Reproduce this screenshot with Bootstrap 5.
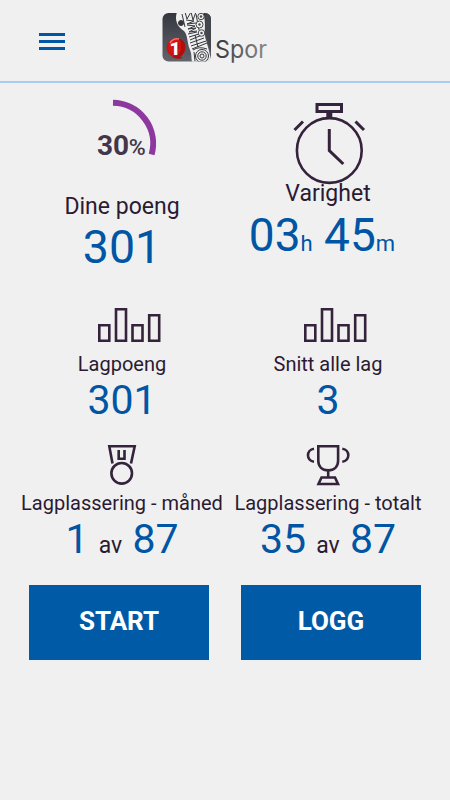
<!DOCTYPE html>
<html lang="no">
<head>
<meta charset="utf-8">
<meta name="viewport" content="width=device-width, initial-scale=1">
<title>Spor</title>
<link href="https://cdn.jsdelivr.net/npm/bootstrap@5.3.0/dist/css/bootstrap.min.css" rel="stylesheet">
<style>
body{background:#f0f0f0;color:#2b1a33;font-family:Roboto,"Liberation Sans",sans-serif}
svg{display:block}
.topbar{height:83px;border-bottom:2px solid #a9ccf0}
.menu-btn{margin-left:38px;width:28px;height:22px;margin-top:2px}
.logo{margin-left:96px}
.stats{padding:0 19px}
.tile-lg{height:207px}
.tile-md{height:142px}
.tile-sm{height:140px}
.line-icon{fill:none;stroke:#35223b;stroke-width:2.6}
.cap-lg{font-size:23px;line-height:28px}
.cap-sm{font-size:20px;line-height:24px}
.num{color:#0055a5;white-space:nowrap}
.num-lg{font-size:46.500px;line-height:52px}
.num-md{font-size:41px;line-height:48px}
.duration{font-size:46px;line-height:54px;margin-right:12px}
.unit{font-size:22px}
.of{font-size:23px;color:#2b1a33}
.actions{padding:0 29px;gap:32px;margin-top:13px}
.btn-spor{--bs-btn-color:#fff;--bs-btn-bg:#005aa5;--bs-btn-hover-bg:#004b8c;--bs-btn-hover-color:#fff;height:75px;font-size:26px;padding-bottom:9px}
</style>
<script src="https://cdn.jsdelivr.net/npm/bootstrap@5.3.0/dist/js/bootstrap.bundle.min.js"></script>
</head>
<body>
<header class="topbar d-flex align-items-center">
  <button class="btn p-0 border-0 rounded-0 menu-btn" aria-label="Meny">
    <svg width="28" height="22" viewBox="38 31 28 22"><path d="M39 34.500h26M39 41.500h26M39 48.500h26" stroke="#0055a5" stroke-width="3"/></svg>
  </button>
  <svg class="logo" width="110" height="60" viewBox="162 11 110 60">
    <defs>
      <linearGradient id="slate" x1="0" y1="0" x2="0" y2="1"><stop offset="0" stop-color="#33363f"/><stop offset="1" stop-color="#62656c"/></linearGradient>
      <linearGradient id="word" x1="0" y1="0" x2="1" y2="0"><stop offset="0" stop-color="#33363a"/><stop offset="1" stop-color="#8a8a8a"/></linearGradient>
      <radialGradient id="ball" cx=".5" cy=".4"><stop offset="0" stop-color="#a90a08"/><stop offset=".6" stop-color="#d81612"/><stop offset="1" stop-color="#c31713"/></radialGradient>
      <clipPath id="tileClip"><rect x="162.500" y="13" width="48.500" height="48.500" rx="6"/></clipPath>
    </defs>
    <g clip-path="url(#tileClip)">
      <rect x="162" y="12" width="50" height="50" fill="url(#slate)"/>
      <path d="M177 12C174 21 178 27 184 31C188 35 187 43 190 50C192 54 191 58 192 62H211C210 53 208 47 206 40C203 32 207 25 203 12Z" fill="#f0f0ef"/>
      <g fill="none" stroke="#34363c" stroke-width="1">
        <path d="M185 12l2 7 4-7 2 8 3-8M186 20l8 1-7 3 9-1M187 25l8 1-7 3 8-1-7 4 8-1M188 34l9-2M189 37l10-3M190 40l12-5M190 43l14-5M191 46l15-5M192 49l15-6M195 35l3 12M182 14l3 13M196 14l3 16"/>
        <circle cx="181" cy="23" r="2.500" fill="#34363c"/>
        <circle cx="202" cy="56" r="2"/><circle cx="202" cy="56" r="4.200"/><circle cx="202" cy="56" r="6.500"/>
        <path d="M193 50q6-4 14-1M195 61l-1-9"/>
      </g>
      <path d="M206 12q-1 7 0 14t1 13q2 8 5 15V12Z" fill="#44464d"/>
      <g fill="#f0f0ef" stroke="#44464d" stroke-width="1"><circle cx="201" cy="16.500" r="3.200"/><circle cx="199.500" cy="24.500" r="3.500"/><circle cx="201.500" cy="33" r="3.300"/></g>
      <g fill="#44464d"><circle cx="201" cy="16.500" r="1.200"/><circle cx="199.500" cy="24.500" r="1.200"/><circle cx="201.500" cy="33" r="1.200"/></g>
      <circle cx="176" cy="47.700" r="9.600" fill="url(#ball)"/>
      <path d="M178 38q9 3 7 11-1 5-5 8 4 0 2 1-5 2-10-1 8-2 9-8 1-7-3-11Z" fill="#b10d0b"/>
      <path d="M170 43q3-5 9-4" stroke="#f27469" stroke-width="1.500" fill="none"/>
      <text x="169.500" y="54.500" font-size="19" font-weight="900" fill="#fff" font-family="Roboto,sans-serif">1</text>
    </g>
    <text x="215" y="58" font-size="24.500" textLength="52" lengthAdjust="spacingAndGlyphs" fill="url(#word)" font-family="Inter,sans-serif">Spor</text>
  </svg>
</header>

<main>
  <div class="stats">
    <div class="row g-0 text-center">
      <section class="col-6 tile-lg d-flex flex-column align-items-center">
        <svg width="120" height="110" viewBox="62 83 120 110">
          <path d="M113 102.800A40.700 40.700 0 0 1 151.600 154.500" fill="none" stroke="#8c389f" stroke-width="6"/>
          <text x="97" y="154.500" font-size="28" font-weight="700" fill="#44364a">30<tspan font-size="22.500" font-weight="500" textLength="17" lengthAdjust="spacingAndGlyphs" dx="-.3">%</tspan></text>
        </svg>
        <div class="cap-lg">Dine poeng</div>
        <div class="num num-lg">301</div>
      </section>
      <section class="col-6 tile-lg d-flex flex-column align-items-center">
        <svg width="90" height="97" viewBox="283 83 90 97" class="line-icon overflow-visible">
          <circle cx="329.300" cy="150.500" r="32.400"/>
          <rect x="317" y="104.500" width="24.500" height="7" stroke-width="3"/>
          <path d="M329.300 112v7" stroke-width="6"/>
          <path d="M329.300 129v21.500l14 13.500M294.500 130l8.500-8.500M355.500 121.500l8.500 8.500" stroke-width="3"/>
        </svg>
        <div class="cap-lg">Varighet</div>
        <div class="num num-lg duration">03<span class="unit">h</span> 45<span class="unit">m</span></div>
      </section>

      <section class="col-6 tile-md d-flex flex-column align-items-center">
        <svg width="90" height="62" viewBox="77 290 90 62" class="line-icon">
          <path d="M99.300 325.300h10v15.500h-10zM116 309.300h10v31.500h-10zM132.500 325.300h10v15.500h-10zM149.200 315.300h10v25.500h-10z"/>
        </svg>
        <div class="cap-sm">Lagpoeng</div>
        <div class="num num-md">301</div>
      </section>
      <section class="col-6 tile-md d-flex flex-column align-items-center">
        <svg width="90" height="62" viewBox="283 290 90 62" class="line-icon">
          <path d="M305.300 325.300h10v15.500h-10zM322 309.300h10v31.500h-10zM338.500 325.300h10v15.500h-10zM355.200 315.300h10v25.500h-10z"/>
        </svg>
        <div class="cap-sm">Snitt alle lag</div>
        <div class="num num-md">3</div>
      </section>

      <section class="col-6 tile-sm d-flex flex-column align-items-center">
        <svg width="90" height="59" viewBox="77 432 90 59" class="line-icon">
          <path d="M112.500 463.500L109.300 446.300H134.700L131 463.500"/>
          <circle cx="121.700" cy="473.300" r="10.300"/>
          <path d="M118.700 450v8.700h5.800V450"/>
        </svg>
        <div class="cap-sm text-nowrap">Lagplassering - måned</div>
        <div class="num num-md">1 <span class="of">av</span> 87</div>
      </section>
      <section class="col-6 tile-sm d-flex flex-column align-items-center">
        <svg width="90" height="59" viewBox="283 432 90 59" class="line-icon">
          <path d="M318.300 446.300h19.800v14.500c0 6-4 9.500-9.900 9.500s-9.900-3.500-9.900-9.500zM328.200 470v7.500M321.500 477.500h13.500l3 6.500h-19.500zM314 448.800c-8 1-8 12 0 13M342.300 448.800c8 1 8 12 0 13"/>
        </svg>
        <div class="cap-sm text-nowrap">Lagplassering - totalt</div>
        <div class="num num-md">35 <span class="of">av</span> 87</div>
      </section>
    </div>
  </div>
  <div class="actions d-flex">
    <button class="btn btn-spor flex-fill w-50 rounded-0 border-0 fw-bold">START</button>
    <button class="btn btn-spor flex-fill w-50 rounded-0 border-0 fw-bold">LOGG</button>
  </div>
</main>
</body>
</html>
